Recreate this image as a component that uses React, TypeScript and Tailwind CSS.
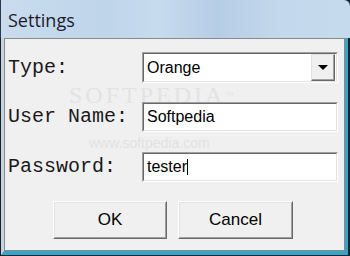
const labelFont = { fontFamily: '"Courier New", "Liberation Mono", monospace' };
const uiFont = { fontFamily: 'Arial, "Liberation Sans", sans-serif' };

function Label({ children }: { children: string }) {
  return (
    <div className="w-[137px] pl-[3px] text-[20px] leading-[20px] text-[#1a1a1a] whitespace-pre" style={labelFont}>
      {children}
    </div>
  );
}

function Sunken({ children }: { children: React.ReactNode }) {
  return (
    <div className="h-full w-[196px] border border-t-[#a0a0a0] border-l-[#a0a0a0] border-r-[#ffffff] border-b-[#ffffff]">
      <div className="flex h-full items-center border border-t-[#696969] border-l-[#696969] border-r-[#e3e3e3] border-b-[#e3e3e3] bg-white">
        {children}
      </div>
    </div>
  );
}

function Button({ label, width }: { label: string; width: string }) {
  return (
    <div className={`h-[38px] ${width} border border-t-white border-l-white border-r-[#696969] border-b-[#696969]`}>
      <div className="flex h-full items-center justify-center border border-t-[#e3e3e3] border-l-[#e3e3e3] border-r-[#a0a0a0] border-b-[#a0a0a0] bg-[#f0f0f0] text-[17px] text-black" style={uiFont}>
        {label}
      </div>
    </div>
  );
}

export default function App() {
  return (
    <div className="flex h-[256px] w-[350px] flex-col overflow-hidden bg-[#14232f]">
      <div
        className="flex h-[38px] shrink-0 items-center rounded-tr-[6px] border-l border-[#2a3a4a] pl-[7px] pt-[2px]"
        style={{ background: 'linear-gradient(90deg, #c9dcee 0%, #bfd5ea 30%, #c7dbee 45%, #b6cde6 62%, #c3d8ec 80%, #c6daee 100%)' }}
      >
        <span className="text-[18px] text-[#1b1b2b]" style={{ fontFamily: '"Open Sans", "Noto Sans", sans-serif' }}>
          Settings
        </span>
      </div>
      <div className="flex flex-1 flex-col pl-px pr-[2px] pb-px">
        <div className="flex flex-1 flex-col border-l-[3px] border-r-[3px] border-b-[4px] border-l-[#c9d3dc] border-r-[#35a5c8] border-b-[#35a5c8]">
          <div className="relative flex flex-1 flex-col border border-[#8a8a8a] bg-[#f0f0f0] pt-[13px]">
            <div className="pointer-events-none absolute left-[64px] top-[47px] text-[24px] leading-[18px] tracking-[3px] text-[#e3e3e3]" style={{ fontFamily: '"Liberation Serif", serif' }}>
              SOFTPEDIA<span className="align-top text-[9px]">™</span>
            </div>
            <div className="pointer-events-none absolute left-[84px] top-[97px] text-[14px] leading-[14px] text-[#e2e2e2]" style={uiFont}>
              www.softpedia.com
            </div>

            <div className="relative flex h-[31px] items-center">
              <Label>Type:</Label>
              <Sunken>
                <span className="flex-1 pl-[3px] text-[16px] text-black" style={uiFont}>Orange</span>
                <div className="mr-px h-[27px] w-[24px] border border-t-[#e3e3e3] border-l-[#e3e3e3] border-r-[#696969] border-b-[#696969] bg-[#f0f0f0]">
                  <div className="flex h-full items-center justify-center border-r border-b border-[#a0a0a0]">
                    <div className="h-0 w-0 border-l-[5px] border-r-[5px] border-t-[5px] border-l-transparent border-r-transparent border-t-black" />
                  </div>
                </div>
              </Sunken>
            </div>

            <div className="relative mt-[19px] flex h-[30px] items-center">
              <Label>User Name:</Label>
              <Sunken>
                <span className="pl-[3px] text-[16px] text-black" style={uiFont}>Softpedia</span>
              </Sunken>
            </div>

            <div className="relative mt-[20px] flex h-[30px] items-center">
              <Label>Password:</Label>
              <Sunken>
                <span className="pl-[3px] text-[16px] text-black" style={uiFont}>tester</span>
                <span className="h-[16px] w-px bg-black" />
              </Sunken>
            </div>

            <div className="relative mt-[19px] flex gap-[11px] pl-[48px]">
              <Button label="OK" width="w-[114px]" />
              <Button label="Cancel" width="w-[115px]" />
            </div>
          </div>
        </div>
      </div>
    </div>
  );
}
